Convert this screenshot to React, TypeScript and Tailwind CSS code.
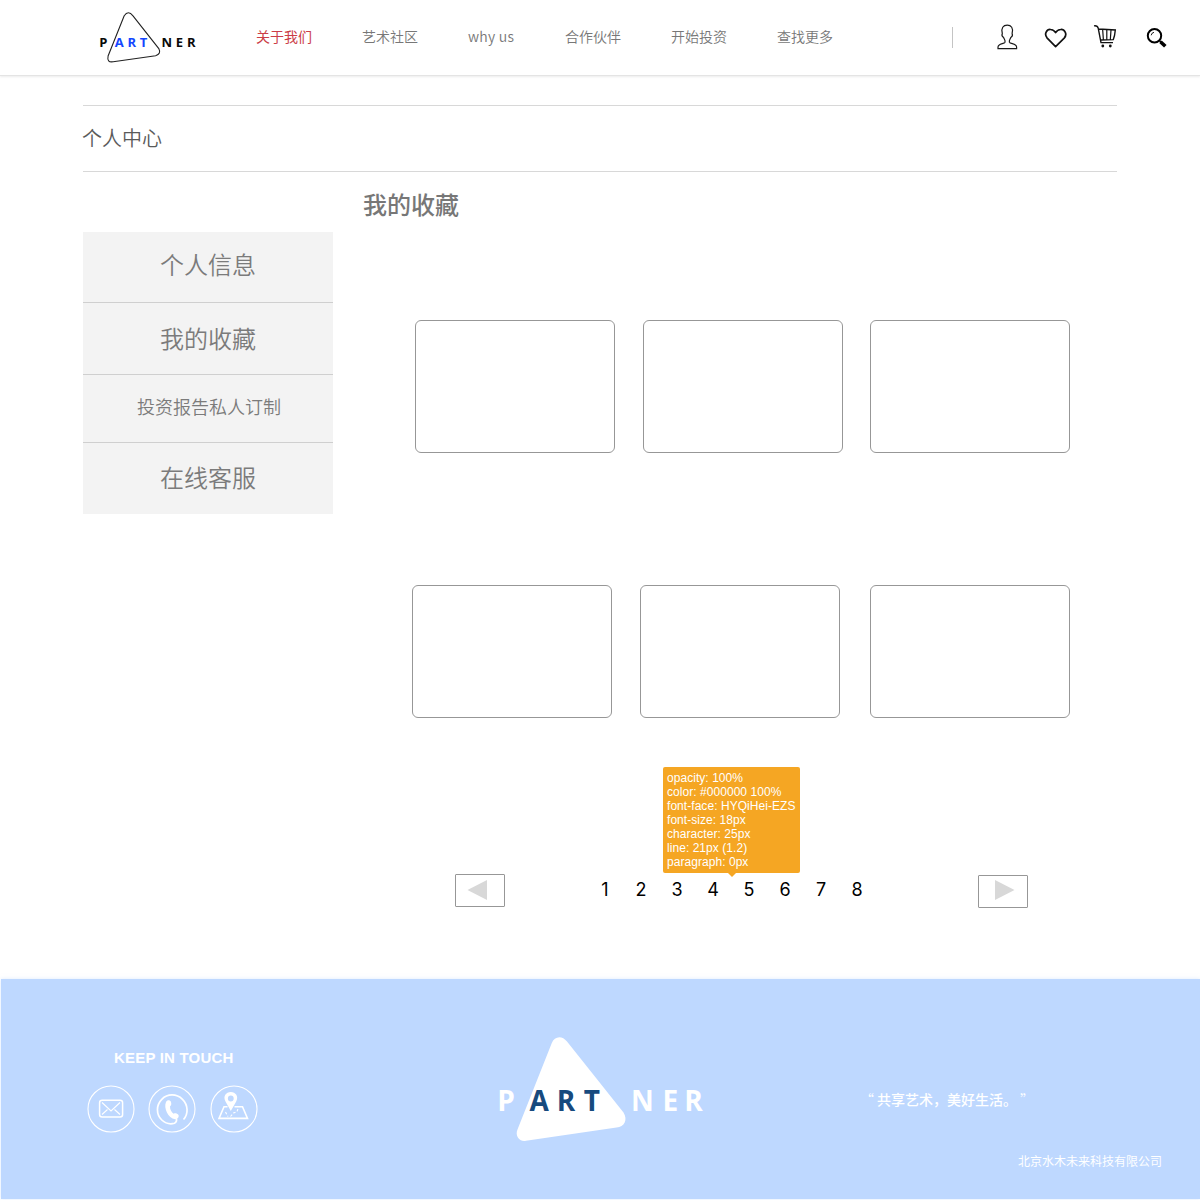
import React from 'react';

const navItems = ['艺术社区', 'why us', '合作伙伴', '开始投资', '查找更多'];
const pages = [1, 2, 3, 4, 5, 6, 7, 8];
const tooltipLines = [
  'opacity: 100%',
  'color: #000000 100%',
  'font-face: HYQiHei-EZS',
  'font-size: 18px',
  'character: 25px',
  'line: 21px (1.2)',
  'paragraph: 0px',
];

function HeaderLogo() {
  return (
    <svg className="ml-[96px] h-[60px] w-[104px] shrink-0" viewBox="96 8 104 60" aria-label="PARTNER">
      <path
        d="M124.2 15.8 L108.1 56 Q106.600 62.8 113.200 61.700 L155.600 55.700 Q161.500 54 158.800 48.600 L133 15.800 Q128.200 9.800 124.200 15.800 Z"
        fill="none"
        stroke="#222"
        strokeWidth="1.1"
      />
      <g fontFamily="'Open Sans', sans-serif" fontWeight="700" fontSize="13">
        <text y="47.3" x="99.3" fill="#0a0a0a">P</text>
        <text y="47.3" x="114.800 127.600 139.700" fill="#1447ff">ART</text>
        <text y="47.3" x="161.500 175.800 187" fill="#0a0a0a">NER</text>
      </g>
    </svg>
  );
}

function FooterLogo() {
  return (
    <svg className="h-[120px] w-[224px]" viewBox="489 1028 224 120" aria-label="PARTNER">
      <path
        d="M551.800 1043 L517.700 1129 C514.500 1136 519.500 1142 526 1140.700 L616.500 1127.500 C624.500 1127 628 1119.500 623.500 1112.500 L567 1041.500 C562 1035 554.500 1036 551.800 1043 Z"
        fill="#fff"
      />
      <g fontFamily="'Open Sans', sans-serif" fontWeight="700" fontSize="28">
        <text y="1110.8" x="497.300" fill="#fff">P</text>
        <text y="1110.8" x="529.500 556.700 583.800" fill="#174a7e">ART</text>
        <text y="1110.8" x="631 662.500 684.300" fill="#fff">NER</text>
      </g>
    </svg>
  );
}

function HeaderIcons() {
  return (
    <div className="-mt-px ml-[44px] flex items-center">
      <svg className="h-[26px] w-[22px]" viewBox="0 0 22 26" fill="none" stroke="#1a1a1a" strokeWidth="1.200">
        <path d="M8 18.200 C8.500 16.500 7.400 15.500 6.600 13.500 C5 12.500 4.600 11 5.300 9.500 C3.800 4 6.300 1.200 10.200 1.200 C14.200 1.200 16.600 4 15.100 9.500 C15.800 11 15.400 12.500 13.800 13.500 C13 15.500 11.900 16.500 12.400 18.200 C13.200 20 19.600 19.500 19.600 23 V24.600 H1 V23 C1.200 19.500 7.200 20 8 18.200 Z" />
      </svg>
      <svg className="ml-[25px] h-[22px] w-[24px]" viewBox="0 0 24 22" fill="none" stroke="#111" strokeWidth="1.700">
        <path d="M11.600 20.600 L3.200 12.100 C-0.400 7.900 2.900 3.100 6.600 3.500 C9.100 3.600 10.600 5.100 11.600 6.600 C12.600 5.100 14.100 3.600 16.600 3.500 C20.400 3.100 23.800 7.900 20.200 12.100 Z" strokeLinejoin="round" />
      </svg>
      <svg className="ml-[25px] h-[26px] w-[26px]" viewBox="0 0 26 26" fill="none" stroke="#111" strokeWidth="1.400">
        <path d="M1 1.900 Q4.500 1.400 5.200 4.200 L8 18.600 H20 M5.600 5 L22.300 6 Q21.800 12 20.300 15.600 L7.800 16" />
        <path d="M9.700 6 L10.400 16 M13.800 6 V16 M18 6 L17.300 16" strokeWidth="1.200" />
        <circle cx="9.800" cy="22" r="1.400" fill="#111" stroke="none" />
        <circle cx="17.300" cy="22" r="1.400" fill="#111" stroke="none" />
      </svg>
      <svg className="ml-[26px] h-[24px] w-[24px]" viewBox="0 0 24 24" fill="none" stroke="#000">
        <circle cx="9.500" cy="10.800" r="6.700" strokeWidth="2" />
        <path d="M6.200 10.300 Q6.500 7.800 9 7.300" strokeWidth="0.900" />
        <path d="M14.300 15.500 L16.500 17.500" strokeWidth="1.500" />
        <path d="M15.500 16.700 L20.300 21.300" strokeWidth="3.600" />
      </svg>
    </div>
  );
}

function SideItem({ label, className }: { label: string; className: string }) {
  return <a className={`flex justify-center ${className}`}>{label}</a>;
}

function Card({ className }: { className: string }) {
  return <div className={`h-[133px] w-[200px] rounded-[6px] border border-[#979797] bg-white ${className}`} />;
}

function ContactIcons() {
  return (
    <div className="flex text-white">
      <svg className="h-[48px] w-[48px]" viewBox="0 0 48 48" fill="none" stroke="currentColor">
        <circle cx="24" cy="24" r="23" strokeWidth="1.100" />
        <rect x="12.600" y="15.300" width="23" height="16.600" rx="2.500" strokeWidth="1.500" />
        <path d="M15 17.500 L24 26 L33 17.500 M15 29.500 L20.500 24.500 M33 29.500 L27.500 24.500" strokeWidth="1.100" />
      </svg>
      <svg className="ml-[13px] h-[48px] w-[48px]" viewBox="0 0 48 48" fill="none" stroke="currentColor">
        <circle cx="24" cy="24" r="23" strokeWidth="1.100" />
        <path d="M35.500 34.500 C40.500 29 40.300 20 34.500 14.300 C28.500 8.500 19.500 8.500 13.800 14.300 C8 20 8 29.500 13.800 35 C17 38 22 39.500 26.500 38.300 C28.300 37.500 28.800 36 28.500 34" strokeWidth="1.700" />
        <path d="M18 17 C19 14.800 22 14.600 22.900 16.800 C23.600 18.600 23.400 20.600 22 21.400 C21.900 24.500 23.600 27.500 25.700 28.700 C27 27.700 29.300 28.400 30.500 30 C31.300 32 29.500 34.300 27 34.300 C20.200 33.300 15.300 23 18 17 Z" fill="currentColor" stroke="none" />
      </svg>
      <svg className="ml-[14px] h-[48px] w-[48px]" viewBox="0 0 48 48" fill="none" stroke="currentColor">
        <circle cx="24" cy="24" r="23" strokeWidth="1.100" />
        <path d="M17.500 21.800 H14 L9 33.400 H37.500 L32.500 21.800 H24.500" strokeWidth="1.600" />
        <path d="M15.500 27 L18 31.500 M20.500 31.500 L23.500 28 L27 26.500 L28.500 22.500" strokeWidth="1.100" strokeDasharray="2.500 1.800" />
        <path fillRule="evenodd" d="M20.800 26 L15.500 16.500 C12.700 11.300 16 7 20.800 7 C25.600 7 29 11.300 26.200 16.500 Z M20.800 10.600 A2.900 2.900 0 1 0 20.800 16.400 A2.900 2.900 0 1 0 20.800 10.600 Z" fill="currentColor" stroke="none" />
      </svg>
    </div>
  );
}

export default function App() {
  return (
    <div className="flex h-[1200px] w-[1200px] flex-col overflow-hidden bg-white font-['Noto_Sans_CJK_SC',sans-serif] font-[350]">
      <header className="flex h-[76px] shrink-0 items-center border-b border-[#e4e4e4] shadow-[0_1px_2px_rgba(0,0,0,0.08)]">
        <HeaderLogo />
        <nav className="-mt-[4px] ml-[56px] flex w-[696px] gap-[50px] text-sm whitespace-nowrap text-[#777]">
          <a className="font-normal text-[#cb3d47]">关于我们</a>
          {navItems.map((item) => (
            <a key={item} className={item === 'why us' ? 'w-[47px] tracking-[0.25px]' : ''}>{item}</a>
          ))}
        </nav>
        <div className="h-[21px] w-px bg-[#c4c4c4]" />
        <HeaderIcons />
      </header>

      <main className="mt-[29px] ml-[83px] flex h-[874px] w-[1034px] shrink-0 flex-col">
        <div className="flex h-[67px] shrink-0 items-center border-y border-[#d8d8d8] pb-[2px] text-xl text-[#5a5a5a]">
          <span className="-ml-px">个人中心</span>
        </div>
        <div className="flex">
          <aside className="mt-[60px] flex h-[282px] w-[250px] shrink-0 flex-col divide-y divide-[#cfcfcf] bg-[#f3f3f3] text-2xl text-[#7b7b7b]">
            <SideItem label="个人信息" className="h-[71px] pt-[16px]" />
            <SideItem label="我的收藏" className="h-[72px] pt-[19px]" />
            <SideItem label="投资报告私人订制" className="h-[68px] pt-[17px] pl-[2px] text-lg" />
            <SideItem label="在线客服" className="h-[71px] pt-[18px]" />
          </aside>

          <section className="flex w-[784px] flex-col">
            <h1 className="mt-[16px] ml-[30px] h-[32px] text-2xl font-medium text-[#777]">我的收藏</h1>
            <div className="mt-[100px] ml-[82px] flex">
              <Card className="" />
              <Card className="ml-[28px]" />
              <Card className="ml-[27px]" />
            </div>
            <div className="mt-[132px] ml-[79px] flex">
              <Card className="" />
              <Card className="ml-[28px]" />
              <Card className="ml-[30px]" />
            </div>

            <div className="mt-[156px] ml-[122px] flex h-[34px] items-start">
              <button className="flex h-[33px] w-[50px] items-center rounded-[1px] border border-[#979797] pb-px pl-[11px]">
                <svg className="h-[20px] w-[20px]" viewBox="0 0 20 20">
                  <path d="M0.500 10 L20 0 V20 Z" fill="#d8d8d8" />
                </svg>
              </button>
              <div className="relative ml-[82px] flex h-[30px] font-['Inter',sans-serif] text-lg leading-[32px] font-normal text-black">
                {pages.map((page) => (
                  <a key={page} className="w-[36px] text-center">{page}</a>
                ))}
                <div className="absolute bottom-[31px] left-[76px] h-[106px] w-[137px] rounded-[2px] bg-[#f5a623] pt-[4px] pl-[4px] font-['Liberation_Sans',sans-serif] text-xs leading-[14px] tracking-[0.05px] whitespace-nowrap text-white">
                  {tooltipLines.map((line) => (
                    <p key={line}>{line}</p>
                  ))}
                  <svg className="absolute top-full left-[65px] h-[4px] w-[8px]" viewBox="0 0 8 4">
                    <path d="M0 0 H8 L4 4 Z" fill="#f5a623" />
                  </svg>
                </div>
              </div>
              <button className="mt-px ml-[103px] flex h-[33px] w-[50px] items-center rounded-[1px] border border-[#979797] pb-[3px] pl-[16px]">
                <svg className="h-[20px] w-[20px]" viewBox="0 0 20 20">
                  <path d="M0 0 L19.500 10 L0 20 Z" fill="#d8d8d8" />
                </svg>
              </button>
            </div>
          </section>
        </div>
      </main>

      <footer className="ml-px flex h-[220px] w-[1199px] shrink-0 bg-[#bed8ff] text-white shadow-[0_0_4px_rgba(190,216,255,0.5)]">
        <div className="ml-[86px] flex w-[402px] flex-col pt-[66px]">
          <h2 className="ml-[27px] h-[24px] font-['Liberation_Sans',sans-serif] text-[15px] leading-[25px] font-bold tracking-[0.2px]">KEEP IN TOUCH</h2>
          <div className="mt-[16px]">
            <ContactIcons />
          </div>
        </div>
        <div className="pt-[49px]">
          <FooterLogo />
        </div>
        <div className="flex w-[486px] flex-col font-normal">
          <p className="mt-[110px] ml-[147px] flex text-sm whitespace-nowrap">
            <span className="mr-[3px]">“</span>
            <span className="font-medium">共享艺术，美好生活。</span>
            <span className="ml-[3px]">”</span>
          </p>
          <p className="mt-[44px] ml-[305px] text-xs whitespace-nowrap">北京水木未来科技有限公司</p>
        </div>
      </footer>
    </div>
  );
}
